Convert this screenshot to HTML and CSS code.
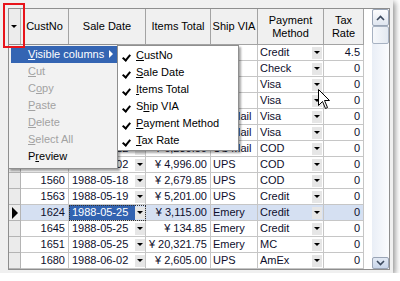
FILE: index.html
```html
<!DOCTYPE html>
<html lang="en">
<head>
  <meta charset="UTF-8" />
  <title>Orders Grid</title>
  <link rel="stylesheet" href="styles.css">
</head>
<body>

  <div class="window">
    <!-- Grid -->
    <div class="grid">
      <div class="table">
        <div class="row head">
          <div class="cell ind"><span class="tri"></span></div>
          <div class="cell">CustNo</div>
          <div class="cell">Sale Date</div>
          <div class="cell">Items Total</div>
          <div class="cell">Ship VIA</div>
          <div class="cell">Payment<br>Method</div>
          <div class="cell">Tax<br>Rate</div>
        </div>

        <div class="row">
          <div class="cell ind"></div>
          <div class="cell num">1221</div>
          <div class="cell date"><span class="txt">1988-04-12</span><span class="dd"></span></div>
          <div class="cell num">¥ 7,885.00</div>
          <div class="cell">UPS</div>
          <div class="cell pay"><span class="txt">Credit</span><span class="dd"></span></div>
          <div class="cell num">4.5</div>
        </div>
        <div class="row">
          <div class="cell ind"></div>
          <div class="cell num">1231</div>
          <div class="cell date"><span class="txt">1988-04-12</span><span class="dd"></span></div>
          <div class="cell num">¥ 4,674.00</div>
          <div class="cell">DHL</div>
          <div class="cell pay"><span class="txt">Check</span><span class="dd"></span></div>
          <div class="cell num">0</div>
        </div>
        <div class="row">
          <div class="cell ind"></div>
          <div class="cell num">1351</div>
          <div class="cell date"><span class="txt">1988-04-13</span><span class="dd"></span></div>
          <div class="cell num">¥ 5,236.00</div>
          <div class="cell">UPS</div>
          <div class="cell pay"><span class="txt">Visa</span><span class="dd"></span></div>
          <div class="cell num">0</div>
        </div>
        <div class="row">
          <div class="cell ind"></div>
          <div class="cell num">1354</div>
          <div class="cell date"><span class="txt">1988-04-14</span><span class="dd"></span></div>
          <div class="cell num">¥ 2,123.00</div>
          <div class="cell">DHL</div>
          <div class="cell pay"><span class="txt">Visa</span><span class="dd"></span></div>
          <div class="cell num">0</div>
        </div>
        <div class="row">
          <div class="cell ind"></div>
          <div class="cell num">1356</div>
          <div class="cell date"><span class="txt">1988-04-16</span><span class="dd"></span></div>
          <div class="cell num">¥ 1,850.00</div>
          <div class="cell">US Mail</div>
          <div class="cell pay"><span class="txt">Visa</span><span class="dd"></span></div>
          <div class="cell num">0</div>
        </div>
        <div class="row">
          <div class="cell ind"></div>
          <div class="cell num">1380</div>
          <div class="cell date"><span class="txt">1988-04-20</span><span class="dd"></span></div>
          <div class="cell num">¥ 3,275.00</div>
          <div class="cell">US Mail</div>
          <div class="cell pay"><span class="txt">Visa</span><span class="dd"></span></div>
          <div class="cell num">0</div>
        </div>
        <div class="row">
          <div class="cell ind"></div>
          <div class="cell num">1384</div>
          <div class="cell date"><span class="txt">1988-04-22</span><span class="dd"></span></div>
          <div class="cell num">¥ 6,230.50</div>
          <div class="cell">US Mail</div>
          <div class="cell pay"><span class="txt">COD</span><span class="dd"></span></div>
          <div class="cell num">0</div>
        </div>
        <div class="row">
          <div class="cell ind"></div>
          <div class="cell num">1510</div>
          <div class="cell date"><span class="txt">1988-05-02</span><span class="dd"></span></div>
          <div class="cell num">¥ 4,996.00</div>
          <div class="cell">UPS</div>
          <div class="cell pay"><span class="txt">COD</span><span class="dd"></span></div>
          <div class="cell num">0</div>
        </div>
        <div class="row">
          <div class="cell ind"></div>
          <div class="cell num">1560</div>
          <div class="cell date"><span class="txt">1988-05-18</span><span class="dd"></span></div>
          <div class="cell num">¥ 2,679.85</div>
          <div class="cell">UPS</div>
          <div class="cell pay"><span class="txt">COD</span><span class="dd"></span></div>
          <div class="cell num">0</div>
        </div>
        <div class="row">
          <div class="cell ind"></div>
          <div class="cell num">1563</div>
          <div class="cell date"><span class="txt">1988-05-19</span><span class="dd"></span></div>
          <div class="cell num">¥ 5,201.00</div>
          <div class="cell">UPS</div>
          <div class="cell pay"><span class="txt">Credit</span><span class="dd"></span></div>
          <div class="cell num">0</div>
        </div>
        <div class="row sel">
          <div class="cell ind"><span class="arrow"></span></div>
          <div class="cell num">1624</div>
          <div class="cell date focus"><span class="txt">1988-05-25</span><span class="dd"></span></div>
          <div class="cell num">¥ 3,115.00</div>
          <div class="cell">Emery</div>
          <div class="cell pay"><span class="txt">Credit</span><span class="dd"></span></div>
          <div class="cell num">0</div>
        </div>
        <div class="row">
          <div class="cell ind"></div>
          <div class="cell num">1645</div>
          <div class="cell date"><span class="txt">1988-05-25</span><span class="dd"></span></div>
          <div class="cell num">¥ 134.85</div>
          <div class="cell">Emery</div>
          <div class="cell pay"><span class="txt">Credit</span><span class="dd"></span></div>
          <div class="cell num">0</div>
        </div>
        <div class="row">
          <div class="cell ind"></div>
          <div class="cell num">1651</div>
          <div class="cell date"><span class="txt">1988-05-25</span><span class="dd"></span></div>
          <div class="cell num">¥ 20,321.75</div>
          <div class="cell">Emery</div>
          <div class="cell pay"><span class="txt">MC</span><span class="dd"></span></div>
          <div class="cell num">0</div>
        </div>
        <div class="row">
          <div class="cell ind"></div>
          <div class="cell num">1680</div>
          <div class="cell date"><span class="txt">1988-06-02</span><span class="dd"></span></div>
          <div class="cell num">¥ 2,605.00</div>
          <div class="cell">UPS</div>
          <div class="cell pay"><span class="txt">AmEx</span><span class="dd"></span></div>
          <div class="cell num">0</div>
        </div>
      </div>

      <!-- Vertical scrollbar -->
      <div class="scrollbar">
        <div class="sb-btn">
          <svg width="9" height="6" viewBox="0 0 9 6"><polyline points="1,5 4.5,1.5 8,5" fill="none" stroke="#3c4a5e" stroke-width="1.6"/></svg>
        </div>
        <div class="sb-thumb"></div>
        <div class="sb-track"></div>
        <div class="sb-btn down">
          <svg width="9" height="6" viewBox="0 0 9 6"><polyline points="1,1 4.5,4.5 8,1" fill="none" stroke="#3c4a5e" stroke-width="1.6"/></svg>
        </div>
      </div>
    </div>

    <!-- Popup menu -->
    <div class="menu">
      <div class="item active"><u>V</u>isible columns<span class="sub-arrow"></span></div>
      <div class="item off"><u>C</u>ut</div>
      <div class="item off">C<u>o</u>py</div>
      <div class="item off"><u>P</u>aste</div>
      <div class="item off"><u>D</u>elete</div>
      <div class="item off"><u>S</u>elect All</div>
      <div class="item">P<u>r</u>eview</div>
    </div>

    <div class="submenu">
      <div class="item"><span class="check"></span><u>C</u>ustNo</div>
      <div class="item"><span class="check"></span><u>S</u>ale Date</div>
      <div class="item"><span class="check"></span><u>I</u>tems Total</div>
      <div class="item"><span class="check"></span>S<u>h</u>ip VIA</div>
      <div class="item"><span class="check"></span><u>P</u>ayment Method</div>
      <div class="item"><span class="check"></span><u>T</u>ax Rate</div>
    </div>

    <!-- Highlight around the menu button -->
    <div class="mark"></div>

    <!-- Mouse pointer -->
    <svg class="pointer" width="13" height="21" viewBox="0 0 13 21">
      <path d="M0.5,0.5 L0.5,16.5 L4.5,12.5 L7.5,19.5 L9.5,18.5 L6.5,11.5 L11.5,11.5 Z" fill="#fff" stroke="#000" stroke-width="1"/>
    </svg>
  </div>

</body>
</html>
```

FILE: styles.css
```css
body {
  margin: 0;
  padding: 0;
  background-color: #ffffff;
  font-family: 'Liberation Sans', Arial, sans-serif;
  font-size: 11px;
  color: #000;
}

.window {
  position: relative;
  width: 393px;
  height: 273px;
  box-sizing: border-box;
  padding: 8px 3px 3px 8px;
  background-color: #f0f0f0;
  box-shadow: 2px 2px 6px rgba(0, 0, 0, 0.45);
}

.grid {
  display: flex;
  height: 262px;
  box-sizing: border-box;
  border: 1px solid #8e8e8e;
  background-color: #fff;
}

.table {
  flex: 1;
}

.row {
  display: grid;
  grid-template-columns: 12px 48px 77px 65px 47px 66px 40px;
  height: 16px;
}

.cell {
  display: flex;
  align-items: center;
  box-sizing: border-box;
  padding: 0 2px;
  border-right: 1px solid #c6c6c6;
  border-bottom: 1px solid #c6c6c6;
  line-height: 15px;
  white-space: nowrap;
  overflow: hidden;
  color: #0e0e2c;
}

.cell.num {
  justify-content: flex-end;
  padding-right: 3px;
}

.head {
  height: 36px;
}

.head .cell {
  justify-content: center;
  text-align: center;
  line-height: 13px;
  background-color: #f0f0f0;
  border-color: #a3a3a3;
  color: #000;
}

.cell.ind {
  padding: 0;
  justify-content: center;
  background-color: #ebebeb;
  border-color: #b4b4b4;
}

.head .cell.ind {
  background-color: #ececec;
}

.tri {
  width: 0;
  height: 0;
  margin-left: -1px;
  border-top: 3px solid #000;
  border-left: 3px solid transparent;
  border-right: 3px solid transparent;
}

.arrow {
  width: 0;
  height: 0;
  border-left: 6px solid #000;
  border-top: 6px solid transparent;
  border-bottom: 6px solid transparent;
}

/* cells with a drop-down button */
.date,
.pay {
  padding: 0;
}

.date .txt {
  flex: 1;
  padding-left: 3px;
  line-height: 15px;
}

.pay .txt {
  flex: 1;
  padding-left: 2px;
}

.dd {
  display: flex;
  align-items: center;
  justify-content: center;
  width: 10px;
  height: 12px;
  margin-right: 0;
  background-color: #e6e6e6;
}

.pay .dd {
  margin-right: 1px;
}

.dd::after {
  content: '';
  border-top: 3px solid #000;
  border-left: 3px solid transparent;
  border-right: 3px solid transparent;
}

.row.sel .cell:not(.ind) {
  background-color: #d5e0f2;
}

.date.focus {
  outline: 1px dotted #333;
  outline-offset: -1px;
}

.date.focus .txt {
  background-color: #3263b1;
  color: #fff;
}

/* scrollbar */
.scrollbar {
  display: flex;
  flex-direction: column;
  width: 17px;
  background: linear-gradient(to right, #e9eef6, #fbfcfe);
}

.sb-btn {
  display: flex;
  align-items: center;
  justify-content: center;
  height: 17px;
  box-sizing: border-box;
  border: 1px solid #9aa5b6;
  border-radius: 2px;
  background: linear-gradient(to bottom, #fdfdfe, #dfe6f0);
}

.sb-btn.down {
  height: 12px;
  background: linear-gradient(to bottom, #e2e9f4, #c9d6ea);
}

.sb-thumb {
  height: 18px;
  box-sizing: border-box;
  border: 1px solid #a7b2c2;
  border-radius: 2px;
  background: linear-gradient(to right, #f6f8fb, #e3e9f1);
}

.sb-track {
  flex: 1;
}

/* popup menus */
.menu,
.submenu {
  position: absolute;
  box-sizing: border-box;
  border: 1px solid #8f8f8f;
  box-shadow: 2px 2px 2px rgba(0, 0, 0, 0.35);
}

.menu {
  left: 8px;
  top: 44px;
  width: 110px;
  height: 125px;
  padding: 1px 0 0 2px;
  background-color: #f2f2f2;
}

.submenu {
  left: 117px;
  top: 45px;
  width: 122px;
  height: 106px;
  padding: 1px 0 0 0;
  background-color: #fff;
}

.item {
  position: relative;
  height: 17px;
  line-height: 17px;
  padding-left: 17px;
  white-space: nowrap;
}

.submenu .item {
  padding-left: 18px;
}

.item.active {
  background-color: #3465b3;
  color: #fff;
}

.item.off {
  color: #a2a2a2;
}

.sub-arrow {
  position: absolute;
  right: 4px;
  top: 4px;
  border-left: 4px solid #fff;
  border-top: 4px solid transparent;
  border-bottom: 4px solid transparent;
}

.check {
  position: absolute;
  left: 6px;
  top: 6px;
  width: 3px;
  height: 6px;
  border-right: 2px solid #000;
  border-bottom: 2px solid #000;
  transform: rotate(40deg);
}

.mark {
  position: absolute;
  left: 3px;
  top: 3px;
  width: 22px;
  height: 45px;
  box-sizing: border-box;
  border: 2px solid #e8141b;
}

.pointer {
  position: absolute;
  left: 318px;
  top: 89px;
}
```
